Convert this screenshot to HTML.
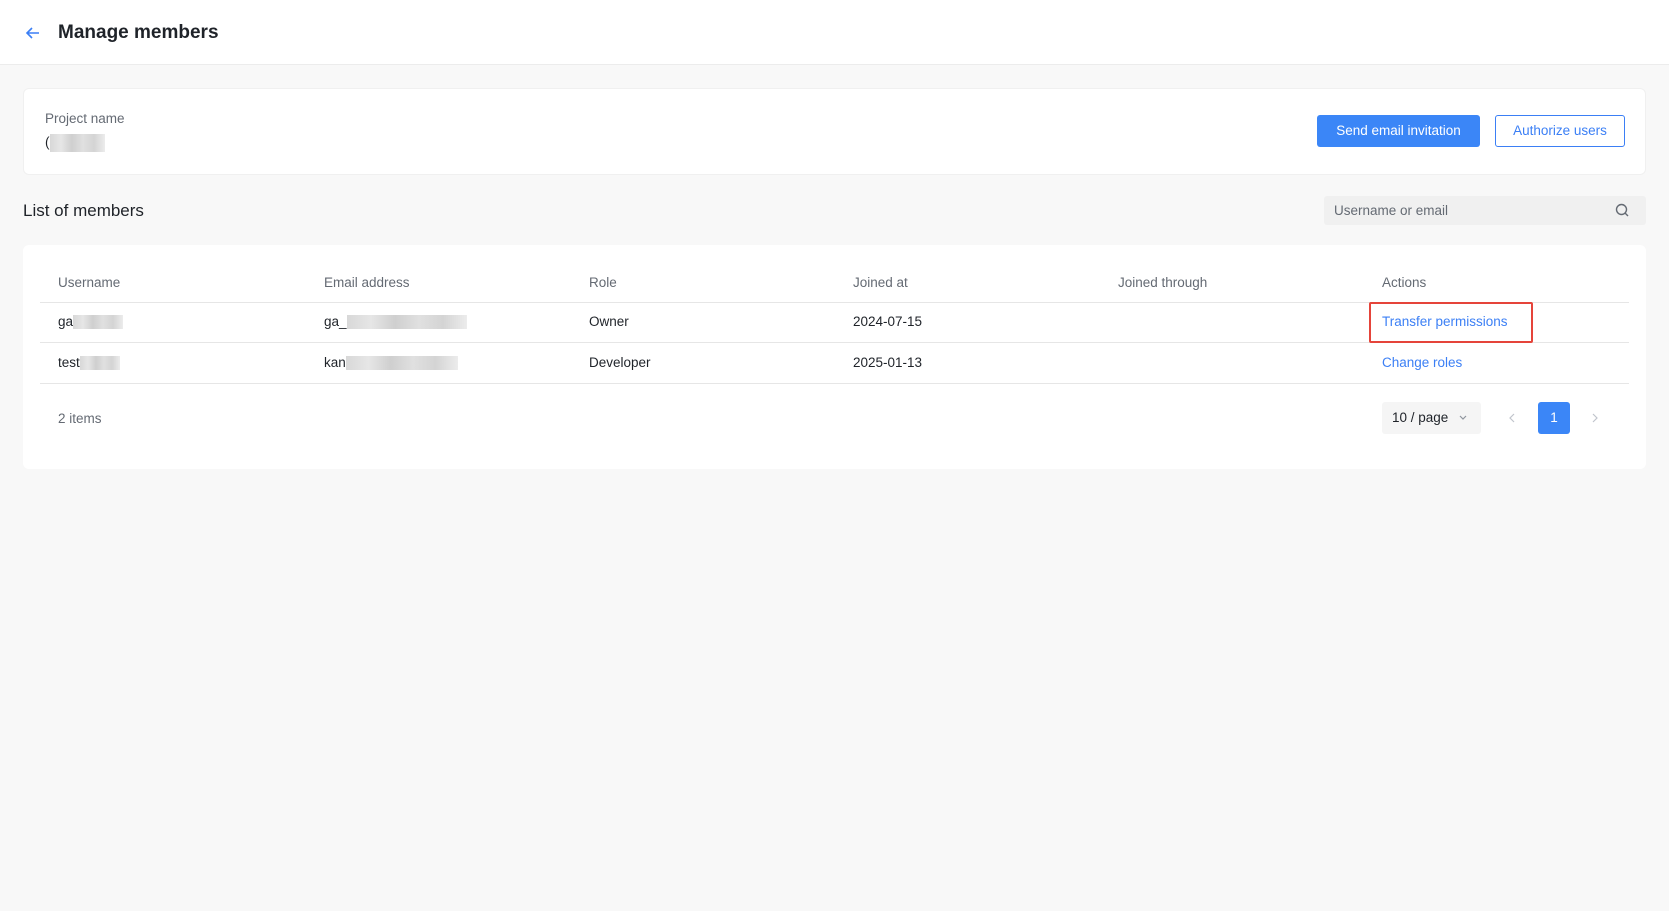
<!DOCTYPE html>
<html><head><meta charset="utf-8"><style>
*{box-sizing:border-box;margin:0;padding:0}
body{width:1669px;height:911px;background:#f8f8f8;font-family:"Liberation Sans",sans-serif;color:#1f2329;position:relative;overflow:hidden;font-size:13.5px}
.abs{position:absolute}
.hdr{left:0;top:0;width:1669px;height:65px;background:#fff;border-bottom:1px solid #ececec}
.card{background:#fff;border-radius:6px;border:1px solid #f0f0f0}
.blur{display:inline-block;height:14px;vertical-align:middle;background:linear-gradient(90deg,#d8d8d8,#e6e6e6,#cfcfcf,#e0e0e0,#d4d4d4,#ececec)}
.th{color:#646a73;top:275px}
.line{left:40px;width:1589px;height:1px;background:#e6e6e6}
.link{color:#3b7ff5}
</style></head><body>
<div class="abs hdr"></div>
<svg class="abs" style="left:25px;top:25px" width="16" height="16" viewBox="0 0 16 16"><path d="M14 8H2M7 3L2 8l5 5" stroke="#3b7ff5" stroke-width="1.6" fill="none"/></svg>
<div class="abs" style="left:58px;top:22px;font-size:19px;font-weight:bold;color:#1f2329">Manage members</div>

<div class="abs card" style="left:23px;top:88px;width:1623px;height:87px"></div>
<div class="abs" style="left:45px;top:111px;color:#646a73;font-size:13.5px">Project name</div>
<div class="abs" style="left:45px;top:134px">(<span class="blur" style="width:55px;height:18px"></span></div>
<div class="abs" style="left:1317px;top:115px;width:163px;height:32px;background:#3b86f7;color:#fff;border-radius:3px;text-align:center;line-height:32px">Send email invitation</div>
<div class="abs" style="left:1495px;top:115px;width:130px;height:32px;border:1px solid #3b7ff5;color:#3b7ff5;border-radius:3px;text-align:center;line-height:30px;background:#fff">Authorize users</div>

<div class="abs" style="left:23px;top:201px;font-size:17px">List of members</div>
<div class="abs" style="left:1324px;top:196px;width:322px;height:29px;background:#f0f0f0;border-radius:3px;color:#646a73;line-height:29px;padding-left:10px">Username or email</div>
<svg class="abs" style="left:1615px;top:203px" width="14" height="14" viewBox="0 0 14 14"><circle cx="6.5" cy="6.5" r="5" stroke="#646a73" stroke-width="1.4" fill="none"/><path d="M10 10l3 3" stroke="#646a73" stroke-width="1.4"/></svg>

<div class="abs card" style="left:23px;top:245px;width:1623px;height:224px;border:none"></div>
<div class="abs th" style="left:58px">Username</div>
<div class="abs th" style="left:324px">Email address</div>
<div class="abs th" style="left:589px">Role</div>
<div class="abs th" style="left:853px">Joined at</div>
<div class="abs th" style="left:1118px">Joined through</div>
<div class="abs th" style="left:1382px">Actions</div>
<div class="abs line" style="top:302px"></div>
<div class="abs line" style="top:342px"></div>
<div class="abs line" style="top:383px"></div>

<div class="abs" style="left:58px;top:314px">ga<span class="blur" style="width:50px"></span></div>
<div class="abs" style="left:324px;top:314px">ga_<span class="blur" style="width:120px"></span></div>
<div class="abs" style="left:589px;top:314px">Owner</div>
<div class="abs" style="left:853px;top:314px">2024-07-15</div>
<div class="abs link" style="left:1382px;top:314px">Transfer permissions</div>
<div class="abs" style="left:1369px;top:302px;width:164px;height:41px;border:2px solid #e5443a;border-radius:2px"></div>

<div class="abs" style="left:58px;top:355px">test<span class="blur" style="width:40px"></span></div>
<div class="abs" style="left:324px;top:355px">kan<span class="blur" style="width:112px"></span></div>
<div class="abs" style="left:589px;top:355px">Developer</div>
<div class="abs" style="left:853px;top:355px">2025-01-13</div>
<div class="abs link" style="left:1382px;top:355px">Change roles</div>

<div class="abs" style="left:58px;top:411px;color:#646a73">2 items</div>
<div class="abs" style="left:1382px;top:402px;width:99px;height:32px;background:#f5f5f5;border-radius:3px;line-height:32px;padding-left:10px">10 / page</div>
<svg class="abs" style="left:1458px;top:414px" width="10" height="8" viewBox="0 0 10 8"><path d="M2 2l3 3 3-3" stroke="#8f959e" stroke-width="1.2" fill="none"/></svg>
<svg class="abs" style="left:1508px;top:412px" width="8" height="12" viewBox="0 0 8 12"><path d="M6 2L2 6l4 4" stroke="#c0c4cc" stroke-width="1.2" fill="none"/></svg>
<div class="abs" style="left:1538px;top:402px;width:32px;height:32px;background:#3b86f7;color:#fff;border-radius:3px;text-align:center;line-height:32px">1</div>
<svg class="abs" style="left:1591px;top:412px" width="8" height="12" viewBox="0 0 8 12"><path d="M2 2l4 4-4 4" stroke="#c0c4cc" stroke-width="1.2" fill="none"/></svg>
</body></html>
